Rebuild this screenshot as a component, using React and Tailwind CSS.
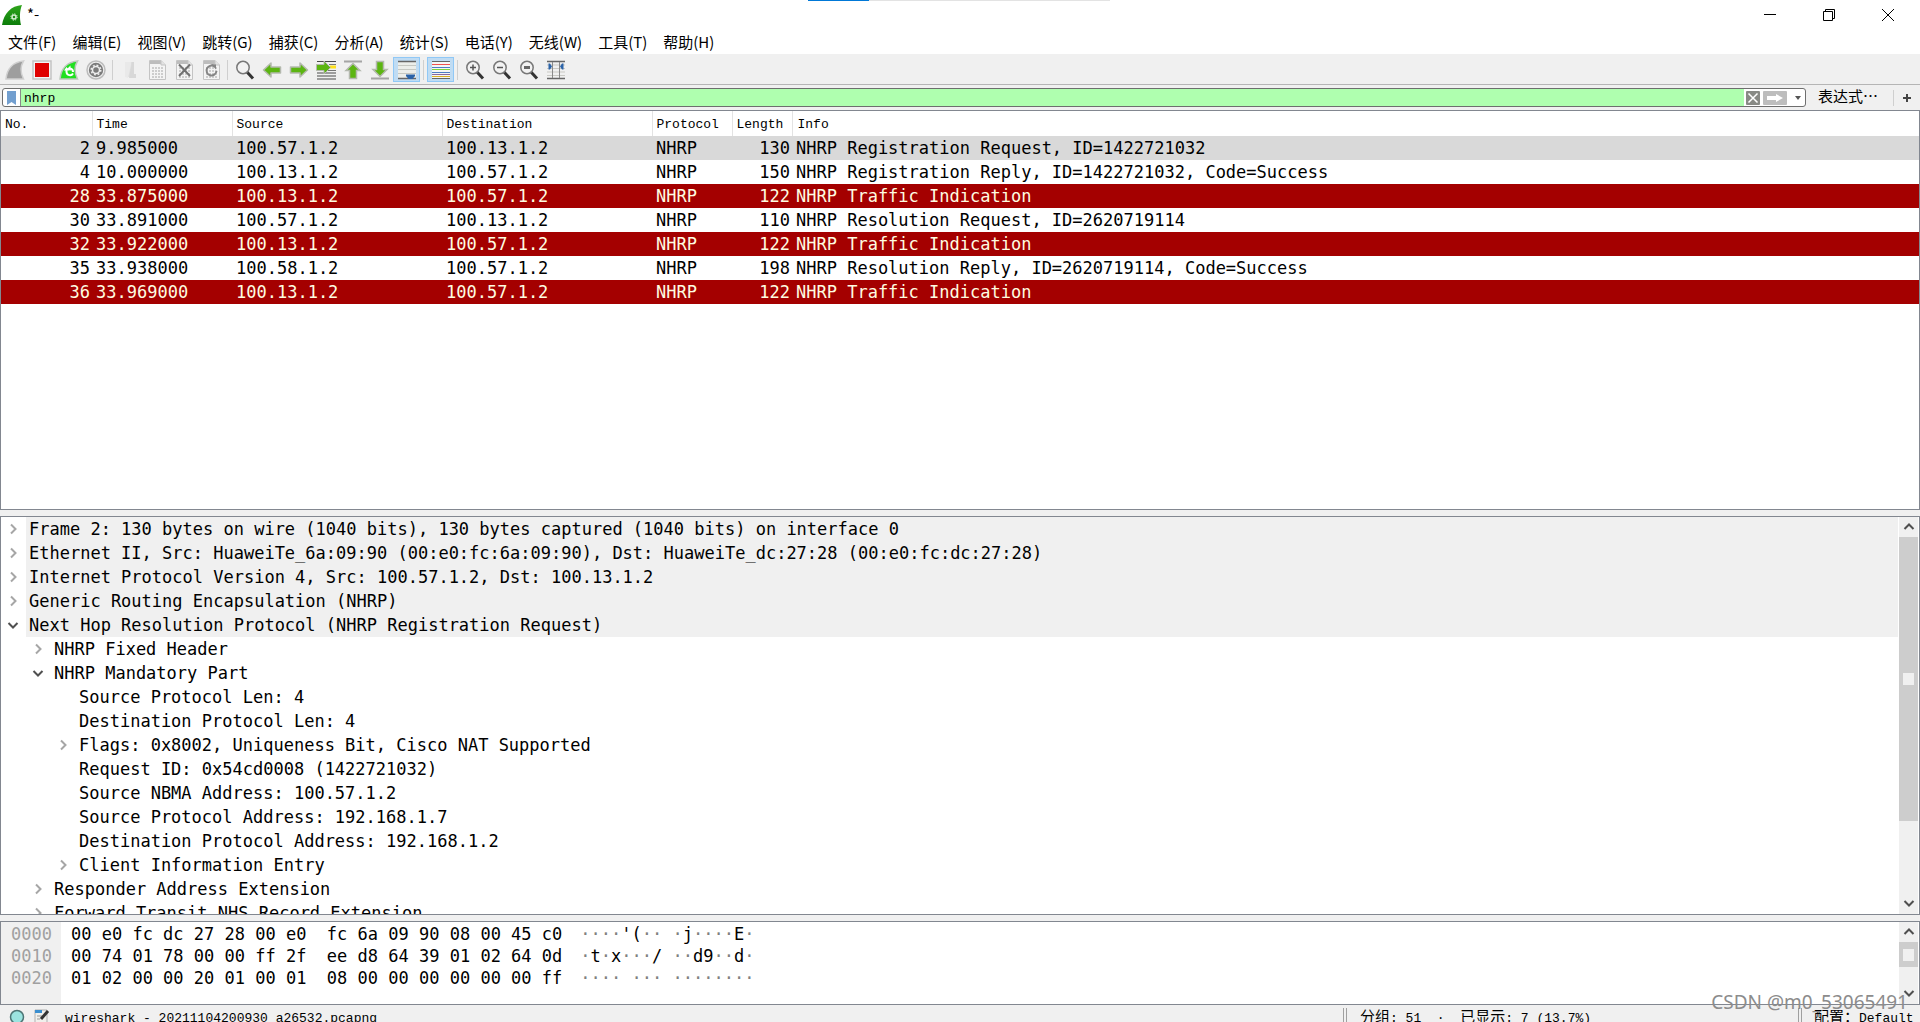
import { useState } from 'react'

const menus = [
  '文件(F)',
  '编辑(E)',
  '视图(V)',
  '跳转(G)',
  '捕获(C)',
  '分析(A)',
  '统计(S)',
  '电话(Y)',
  '无线(W)',
  '工具(T)',
  '帮助(H)',
]

const packets = [
  [2, '9.985000', '100.57.1.2', '100.13.1.2', 130, 'NHRP Registration Request, ID=1422721032'],
  [4, '10.000000', '100.13.1.2', '100.57.1.2', 150, 'NHRP Registration Reply, ID=1422721032, Code=Success'],
  [28, '33.875000', '100.13.1.2', '100.57.1.2', 122, 'NHRP Traffic Indication'],
  [30, '33.891000', '100.57.1.2', '100.13.1.2', 110, 'NHRP Resolution Request, ID=2620719114'],
  [32, '33.922000', '100.13.1.2', '100.57.1.2', 122, 'NHRP Traffic Indication'],
  [35, '33.938000', '100.58.1.2', '100.57.1.2', 198, 'NHRP Resolution Reply, ID=2620719114, Code=Success'],
  [36, '33.969000', '100.13.1.2', '100.57.1.2', 122, 'NHRP Traffic Indication'],
]

// depth, state (closed / open / leaf), text
const tree = [
  [0, 'closed', 'Frame 2: 130 bytes on wire (1040 bits), 130 bytes captured (1040 bits) on interface 0'],
  [0, 'closed', 'Ethernet II, Src: HuaweiTe_6a:09:90 (00:e0:fc:6a:09:90), Dst: HuaweiTe_dc:27:28 (00:e0:fc:dc:27:28)'],
  [0, 'closed', 'Internet Protocol Version 4, Src: 100.57.1.2, Dst: 100.13.1.2'],
  [0, 'closed', 'Generic Routing Encapsulation (NHRP)'],
  [0, 'open', 'Next Hop Resolution Protocol (NHRP Registration Request)'],
  [1, 'closed', 'NHRP Fixed Header'],
  [1, 'open', 'NHRP Mandatory Part'],
  [2, 'leaf', 'Source Protocol Len: 4'],
  [2, 'leaf', 'Destination Protocol Len: 4'],
  [2, 'closed', 'Flags: 0x8002, Uniqueness Bit, Cisco NAT Supported'],
  [2, 'leaf', 'Request ID: 0x54cd0008 (1422721032)'],
  [2, 'leaf', 'Source NBMA Address: 100.57.1.2'],
  [2, 'leaf', 'Source Protocol Address: 192.168.1.7'],
  [2, 'leaf', 'Destination Protocol Address: 192.168.1.2'],
  [2, 'closed', 'Client Information Entry'],
  [1, 'closed', 'Responder Address Extension'],
  [1, 'closed', 'Forward Transit NHS Record Extension'],
]

const indent = ['pl-0', 'pl-[25px]', 'pl-[50px]']

const hex = [
  ['0000', '00 e0 fc dc 27 28 00 e0  fc 6a 09 90 08 00 45 c0', "····'(·· ·j····E·"],
  ['0010', '00 74 01 78 00 00 ff 2f  ee d8 64 39 01 02 64 0d', '·t·x···/ ··d9··d·'],
  ['0020', '01 02 00 00 20 01 00 01  08 00 00 00 00 00 00 ff', '···· ··· ········'],
]

const mono = "font-['DejaVu_Sans_Mono',monospace]"
const uiMono = "font-['Liberation_Mono','Noto_Sans_CJK_SC',monospace]"

const Svg = ({ children, size = 20 }) => (
  <svg width={size} height={size} viewBox="0 0 20 20" fill="none">
    {children}
  </svg>
)

const Fin = ({ fill, stroke, children }) => (
  <Svg>
    <path d="M1 19C2 9 8 2 18.500 1C15.500 6 15.500 13 18.500 19Z" fill={fill} stroke={stroke} strokeWidth="1.500" />
    {children}
  </Svg>
)

const AppIcon = () => (
  <Svg>
    <defs>
      <linearGradient id="fin" x1="0" y1="0" x2="0" y2="1">
        <stop offset="0" stopColor="#2fa51c" />
        <stop offset="1" stopColor="#0c7d0a" />
      </linearGradient>
    </defs>
    <path d="M0 20C2 8 9 1 20 0C17.500 6 17.500 13 19 20Z" fill="url(#fin)" />
    <circle cx="12" cy="12" r="2" stroke="#d5f0d0" strokeWidth="1.500" />
    <circle cx="12" cy="12" r="3.200" stroke="#d5f0d0" strokeWidth="1" strokeDasharray="1.250 1.250" />
  </Svg>
)

const Page = ({ children }) => (
  <Svg>
    <path d="M2.500 .5H14L18.500 5V19.500H2.500Z" fill="#f4f4f4" stroke="#c4c4c4" />
    <path d="M3 1H14V4H3Z" fill="#bdbdbd" />
    <path d="M14 .5V5H18.500" fill="#e2e2e2" stroke="#c4c4c4" />
    <path d="M5 8H16M5 11H16M5 14H16M5 17H16" stroke="#cdcdcd" strokeWidth="2" strokeDasharray="2 1" />
    {children}
  </Svg>
)

const Arrow = ({ right }) => (
  <Svg>
    <path
      d="M1.500 10L9 3V7H18.500V13H9V17Z"
      transform={right ? 'rotate(180 10 10)' : undefined}
      fill="#5cb512"
      stroke="#b4b9ae"
      strokeWidth="1.500"
      strokeLinejoin="round"
    />
  </Svg>
)

const Magnifier = ({ sign }) => (
  <Svg>
    <path d="M12 12L18 18.500" stroke="#333" strokeWidth="3" />
    <circle cx="8" cy="7.500" r="6.200" fill="#f2f2f2" stroke="#777" strokeWidth="1.500" />
    {sign === '+' && <path d="M5 7.500H11M8 4.500V10.500" stroke="#555" strokeWidth="1.500" />}
    {sign === '-' && <path d="M5 7.500H11" stroke="#555" strokeWidth="1.500" />}
    {sign === '=' && <path d="M5 7.500H11" stroke="#666" strokeWidth="3" />}
  </Svg>
)

const tools = [
  {
    name: '开始捕获',
    icon: <Fin fill="#9e9e9e" stroke="#d0d0d0" />,
  },
  {
    name: '停止捕获',
    icon: (
      <Svg>
        <path d="M1 1H19V19H1Z" fill="#f4f4f4" stroke="#c3c3c3" strokeWidth="1.500" />
        <path d="M3 3H17V17H3Z" fill="#e00000" />
      </Svg>
    ),
  },
  {
    name: '重新开始捕获',
    icon: (
      <Fin fill="#20e020" stroke="#bcc8bc">
        <path d="M7.500 9V12A3.500 3.500 0 0 0 14 13.500M14 12A3.500 3.500 0 0 0 11 8.500" stroke="#fff" strokeWidth="2" />
        <path d="M5 10.500L7.500 7L10.500 10.500ZM11.500 5.500V11L8.500 8.500Z" fill="#fff" />
      </Fin>
    ),
  },
  {
    name: '捕获选项',
    icon: (
      <Svg>
        <circle cx="10" cy="10" r="9" fill="#f0f0f0" stroke="#bcbcbc" strokeWidth="1.500" />
        <circle cx="10" cy="10" r="7.200" fill="#7b7b7b" />
        <circle cx="10" cy="10" r="3.500" stroke="#eee" strokeWidth="1.500" />
        <circle cx="10" cy="10" r="4.800" stroke="#eee" strokeWidth="1.500" strokeDasharray="1.880 1.880" />
      </Svg>
    ),
  },
  { sep: true },
  {
    name: '打开',
    icon: (
      <Svg>
        <path d="M5 2H13V17H5Z" fill="#dedede" />
        <path d="M5 2H11V5L8 18L5 17Z" fill="#e9e9e9" />
        <path d="M12 2H14V14H16V18H9Z" fill="#d8d8d8" />
      </Svg>
    ),
  },
  { name: '保存', icon: <Page /> },
  {
    name: '关闭文件',
    icon: (
      <Page>
        <path d="M5 4.500L16 16M16 4.500L5 16" stroke="#707070" strokeWidth="2" />
      </Page>
    ),
  },
  {
    name: '重新加载',
    icon: (
      <Page>
        <path d="M13.500 6.500A5 5 0 1 0 15.500 11" stroke="#858585" strokeWidth="2" />
        <path d="M10 4L15 4.500V9.500Z" fill="#858585" />
      </Page>
    ),
  },
  { sep: true },
  { name: '查找', icon: <Magnifier /> },
  { name: '上一分组', icon: <Arrow /> },
  { name: '下一分组', icon: <Arrow right /> },
  {
    name: '转到分组',
    icon: (
      <Svg>
        <path d="M1 1.500H20M1 16H20M1 19H20M1 13H20" stroke="#4a4a4a" strokeWidth="1.200" />
        <path d="M13 4.500H20M12 10.500H20" stroke="#777" />
        <path d="M14 7H20" stroke="#ffe11c" strokeWidth="3" />
        <path d="M14.500 7.500L8 1V4.500H.5V10.500H8V14Z" fill="#5cb512" stroke="#b4b9ae" />
      </Svg>
    ),
  },
  {
    name: '首个分组',
    icon: (
      <Svg>
        <path d="M1 1.500H19" stroke="#a5a5a5" strokeWidth="2" />
        <path d="M10 3.500L17 10.500H13.500V18.500H6.500V10.500H3Z" fill="#5cb512" stroke="#b4b9ae" strokeWidth="1.500" />
      </Svg>
    ),
  },
  {
    name: '最新分组',
    icon: (
      <Svg>
        <path d="M1 18.500H19" stroke="#a5a5a5" strokeWidth="2" />
        <path d="M10 16.500L17 9.500H13.500V1.500H6.500V9.500H3Z" fill="#5cb512" stroke="#b4b9ae" strokeWidth="1.500" />
      </Svg>
    ),
  },
  {
    name: '自动滚动',
    active: true,
    icon: (
      <Svg>
        <path d="M1 1H19V19H1Z" fill="#eceeea" />
        <path d="M1 1.500H19M1 18.500H19" stroke="#666" strokeWidth="1.500" />
        <path d="M1 5.500H19M1 9.500H19M1 13.500H19" stroke="#c6c8c2" />
        <path d="M9 14.500H18V16L15.500 19H11.500L9 16Z" fill="#2b63a8" />
      </Svg>
    ),
  },
  { sep: true },
  {
    name: '着色',
    active: true,
    icon: (
      <Svg>
        <path d="M1 1H19V19H1Z" fill="#f5f5f5" />
        <path d="M1 1.500H19M1 18.500H19" stroke="#666" />
        <path d="M1 4.500H19" stroke="#f05050" />
        <path d="M1 7.500H19" stroke="#4c7dc4" />
        <path d="M1 9.500H19" stroke="#7ed23c" />
        <path d="M1 12.500H19" stroke="#4c7dc4" />
        <path d="M1 14.500H19" stroke="#8a68a0" />
        <path d="M1 16.500H19" stroke="#d9ae22" />
      </Svg>
    ),
  },
  { sep: true },
  { name: '放大', icon: <Magnifier sign="+" /> },
  { name: '缩小', icon: <Magnifier sign="-" /> },
  { name: '原始大小', icon: <Magnifier sign="=" /> },
  {
    name: '调整列宽',
    icon: (
      <Svg>
        <path d="M1 5H19M1 8.500H19M1 12H19M1 15.500H19" stroke="#c9c9c4" />
        <path d="M1 1.500H19M1 18.500H19" stroke="#666" strokeWidth="1.500" />
        <path d="M6.500 2V18M13.500 2V18" stroke="#8a8a8a" />
        <path d="M2.500 3.500H4L6 6.500L4 9.500H2.500ZM17.500 3.500H16L14 6.500L16 9.500H17.500Z" fill="#2b63a8" />
      </Svg>
    ),
  },
]

const Chevron = ({ dir }) => {
  const paths = {
    up: 'M1.500 8L6 3.500L10.500 8',
    down: 'M1.500 4L6 8.500L10.500 4',
    right: 'M4 1.500L8.500 6L4 10.500',
  }
  return (
    <svg width="12" height="12" viewBox="0 0 12 12" fill="none">
      <path d={paths[dir]} stroke={dir === 'right' ? '#a6a6a6' : '#505050'} strokeWidth="2" />
    </svg>
  )
}

const ScrollBar = ({ thumb }) => (
  <div className="flex w-5 shrink-0 flex-col border-r border-white bg-[#f0f0f0]">
    <button aria-label="向上滚动" className="flex h-5 shrink-0 items-center justify-center">
      <Chevron dir="up" />
    </button>
    <div className="min-h-0 flex-1">
      <div className={`flex items-center justify-center bg-[#cdcdcd] ${thumb}`}>
        <span className="h-3 w-[11px] bg-[#f0f0f0]" />
      </div>
    </div>
    <button aria-label="向下滚动" className="flex h-[22px] shrink-0 items-center justify-center">
      <Chevron dir="down" />
    </button>
  </div>
)

const TitleBar = () => (
  <header className="relative flex h-[29px] shrink-0 items-center pl-[2px] pr-[3px]">
    <AppIcon />
    <h1 className="flex-1 pl-[5px] text-[15px]">*-</h1>
    <div className="absolute left-[42.1%] top-0 flex h-px w-[302px] bg-[#e3e3e3]">
      <span className="w-[61px] bg-[#0078d7]" />
    </div>
    <button aria-label="最小化" className="flex w-[59px] justify-center">
      <svg width="12" height="12" stroke="#000"><path d="M0 5.500H12" /></svg>
    </button>
    <button aria-label="还原" className="flex w-[59px] justify-center">
      <svg width="12" height="12" fill="none" stroke="#000">
        <path d="M.5 2.500H9.500V11.500H.5ZM2.500 2.500V.5H11.500V9.500H9.500" />
      </svg>
    </button>
    <button aria-label="关闭" className="flex w-[59px] justify-center">
      <svg width="12" height="12" stroke="#000"><path d="M0 0L12 12M12 0L0 12" /></svg>
    </button>
  </header>
)

const ToolBar = () => (
  <div className="flex h-[30px] shrink-0 items-center border-b border-[#b5b5b5] bg-[#f0f0f0] pl-px">
    {tools.map((t, i) =>
      t.sep ? (
        <span key={i} className="mx-[3px] h-5 w-px bg-[#cfcfcf]" />
      ) : (
        <button
          key={i}
          aria-label={t.name}
          className={
            t.active
              ? 'flex h-[25px] w-[27px] items-center justify-center border border-[#90c8f6] bg-[#c0dcf3]'
              : 'flex h-[25px] w-[27px] items-center justify-center'
          }
        >
          {t.icon}
        </button>
      )
    )}
  </div>
)

const FilterBar = ({ filter, setFilter }) => (
  <div className={`flex h-[25px] shrink-0 items-center bg-[#f0f0f0] pl-[2px] pr-[9px] ${uiMono}`}>
    <div className="flex h-[19px] flex-1 items-stretch overflow-hidden rounded-[3px] border border-[#6e6e6e] bg-white">
      <button aria-label="书签" className="flex w-[18px] items-center justify-center border-r border-[#8a8a8a]">
        <svg width="9" height="14"><path d="M0 0H9V14L4.500 11L0 14Z" fill="#729fcf" /></svg>
      </button>
      <input
        aria-label="显示过滤器"
        value={filter}
        onChange={(e) => setFilter(e.target.value)}
        className="min-w-0 flex-1 bg-[#afffaf] pl-[3px] pt-[2px] text-[13px] outline-none"
      />
      <button aria-label="清除" className="ml-[2px] flex items-center">
        <svg width="14" height="14" stroke="#fff">
          <rect width="14" height="14" rx="1" fill="#888a85" stroke="none" />
          <path d="M2.500 2.500L11.500 11.500M11.500 2.500L2.500 11.500" strokeWidth="1.500" />
        </svg>
      </button>
      <button aria-label="应用" className="ml-[3px] flex items-center">
        <svg width="24" height="14">
          <rect width="24" height="14" rx="1" fill="#bdbdbd" />
          <path d="M4 5H13V3L20 7L13 11V9H4Z" fill="#fff" />
        </svg>
      </button>
      <button aria-label="历史" className="flex w-[18px] items-center justify-center pl-1">
        <svg width="6" height="4"><path d="M0 0H6L3 4Z" fill="#555" /></svg>
      </button>
    </div>
    <button className="ml-3 text-[15px]">表达式<span className="font-['Noto_Sans_CJK_SC',sans-serif]">⋯</span></button>
    <span className="ml-[15px] h-4 w-px bg-[#cfcfcf]" />
    <button aria-label="添加" className="ml-[9px]">
      <svg width="8" height="8" stroke="#444" strokeWidth="2"><path d="M0 4H8M4 0V8" /></svg>
    </button>
  </div>
)

const rowColor = (no, selected) => {
  if (no === selected) return 'bg-[#d9d9d9]'
  if ([28, 32, 36].includes(no)) return 'bg-[#a40000] text-[#fffce0]'
  return 'bg-white'
}

const PacketList = ({ selected, setSelected }) => (
  <section className={`min-h-0 flex-1 overflow-hidden border border-[#828790] bg-white ${mono}`}>
    <table className="w-full table-fixed border-collapse whitespace-pre text-left text-[17px]">
      <colgroup>
        <col className="w-[91px]" />
        <col className="w-[140px]" />
        <col className="w-[210px]" />
        <col className="w-[210px]" />
        <col className="w-[80px]" />
        <col className="w-[60px]" />
        <col />
      </colgroup>
      <thead>
        <tr className={`h-[25px] text-[13px] ${uiMono}`}>
          {['No.', 'Time', 'Source', 'Destination', 'Protocol', 'Length'].map((h) => (
            <th key={h} className="border-r border-[#e3e3e3] p-0 pl-1 pt-[2px] font-normal">
              {h}
            </th>
          ))}
          <th className="p-0 pl-[5px] pt-[2px] font-normal">Info</th>
        </tr>
      </thead>
      <tbody>
        {packets.map(([no, time, src, dst, len, info]) => (
          <tr
            key={no}
            onClick={() => setSelected(no)}
            className={`h-6 leading-6 ${rowColor(no, selected)}`}
          >
            <td className="p-0 pr-[2px] text-right">{no}</td>
            <td className="p-0 pl-1">{time}</td>
            <td className="p-0 pl-1">{src}</td>
            <td className="p-0 pl-1">{dst}</td>
            <td className="p-0 pl-1">NHRP</td>
            <td className="p-0 pr-[2px] text-right">{len}</td>
            <td className="p-0 pl-1">{info}</td>
          </tr>
        ))}
      </tbody>
    </table>
  </section>
)

const PacketDetails = () => (
  <section className={`flex min-h-0 flex-1 border border-[#828790] bg-white text-[17px] ${mono}`}>
    <ul className="min-w-0 flex-1 overflow-hidden whitespace-pre">
      {tree.map(([depth, state, text]) => (
        <li key={text} className={`flex h-6 leading-6 ${indent[depth]}`}>
          <span className="flex w-[25px] shrink-0 items-center pl-[6px]">
            {state !== 'leaf' && (
              <button aria-label={text} className="flex">
                <Chevron dir={state === 'open' ? 'down' : 'right'} />
              </button>
            )}
          </span>
          <span className={depth === 0 ? 'mr-px flex-1 bg-[#f0f0f0] pl-[3px]' : 'flex-1 pl-[3px]'}>
            {text}
          </span>
        </li>
      ))}
    </ul>
    <ScrollBar thumb="h-4/5" />
  </section>
)

const HexDump = () => (
  <section className={`flex h-[84px] shrink-0 border border-[#828790] bg-white text-[17px] ${mono}`}>
    <div className="w-[60px] shrink-0 bg-[#f0f0f0] pl-[10px] text-[#a0a0a0]">
      {hex.map(([offset]) => (
        <div key={offset} className="h-[22px] leading-[24px]">{offset}</div>
      ))}
    </div>
    <div className="min-w-0 flex-1 overflow-hidden whitespace-pre pl-[10px]">
      {hex.map(([offset, bytes, ascii]) => (
        <div key={offset} className="flex h-[22px] gap-[18px] leading-[24px]">
          <span>{bytes}</span>
          <span>
            {ascii.split('').map((c, i) => (
              <span key={i} className={c === '·' ? 'text-[#808080]' : ''}>{c}</span>
            ))}
          </span>
        </div>
      ))}
    </div>
    <ScrollBar thumb="h-[25px]" />
  </section>
)

const StatusBar = () => (
  <footer className={`flex h-[17px] shrink-0 items-start overflow-hidden bg-[#f0f0f0] text-[13px] leading-[28px] ${uiMono}`}>
    <div className="flex min-w-0 flex-1 pl-[9px]">
      <svg className="mt-[4px]" width="16" height="16">
        <circle cx="8" cy="8" r="6.500" fill="#9be4e0" stroke="#4c7474" strokeWidth="1.500" />
      </svg>
      <svg className="ml-[9px] mt-[4px]" width="16" height="16">
        <path d="M1 1H13V16H1Z" fill="#f0f0ec" stroke="#b0b0b0" />
        <path d="M1 1H8V4H1Z" fill="#3a8fd0" />
        <path d="M3 7H8M3 10H6" stroke="#999" />
        <path d="M14 2L7 10" stroke="#333" strokeWidth="3" />
      </svg>
      <span className="ml-[15px] whitespace-pre">wireshark_-_20211104200930_a26532.pcapng</span>
    </div>
    <div className="flex w-[455px] shrink-0 whitespace-pre">
      <span className="mr-[13px] mt-[3px] h-5 w-1 border-x border-[#a0a0a0]" />
      <span>
        <span className="text-[15px]">分组</span>: 51  ·  <span className="text-[15px]">已显示</span>: 7 (13.7%)
      </span>
    </div>
    <div className="flex w-[122px] shrink-0 whitespace-pre">
      <span className="mr-[12px] mt-[3px] h-5 w-1 border-x border-[#a0a0a0]" />
      <span><span className="text-[15px]">配置：</span>Default</span>
    </div>
  </footer>
)

const App = () => {
  const [filter, setFilter] = useState('nhrp')
  const [selected, setSelected] = useState(2)

  return (
    <div className="relative flex h-screen w-full flex-col overflow-hidden bg-white font-['Noto_Sans_CJK_SC',sans-serif] text-black">
      <TitleBar />
      <nav className="flex h-[26px] shrink-0 items-center gap-4 border-b border-[#f0f0f0] pl-2 pt-[2px] text-[15px]">
        {menus.map((m) => (
          <button key={m}>{m}</button>
        ))}
      </nav>
      <ToolBar />
      <FilterBar filter={filter} setFilter={setFilter} />
      <main className="flex min-h-0 flex-1 flex-col gap-[6px] bg-[#f0f0f0]">
        <PacketList selected={selected} setSelected={setSelected} />
        <PacketDetails />
        <HexDump />
      </main>
      <StatusBar />
      <span className="pointer-events-none absolute bottom-[7px] right-[12px] font-['Noto_Sans',sans-serif] text-[19px] leading-[26px] text-[#8c8c8c]">
        CSDN @m0_53065491
      </span>
    </div>
  )
}

export default App
